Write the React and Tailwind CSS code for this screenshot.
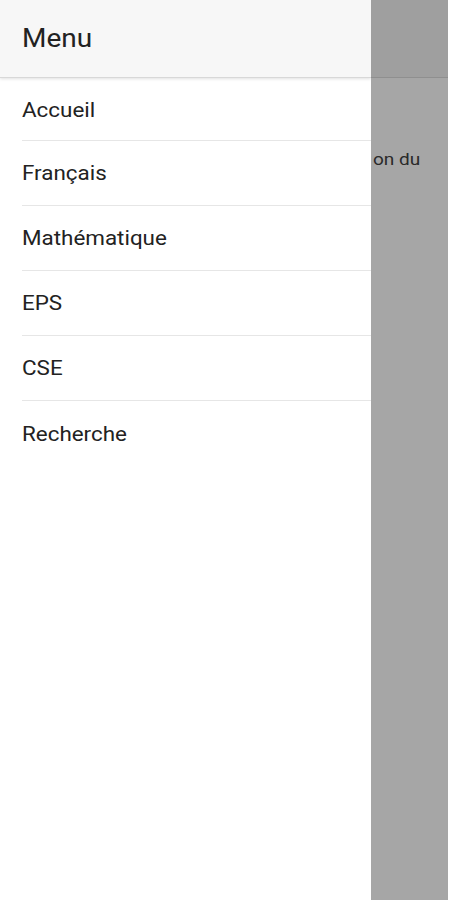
const items = ["Accueil", "Français", "Mathématique", "EPS", "CSE", "Recherche"];

export default function App() {
  return (
    <div
      className="flex h-[900px] w-[450px] overflow-hidden bg-white"
      style={{ fontFamily: "Roboto, 'Noto Sans', sans-serif" }}
    >
      {/* drawer */}
      <div className="flex w-[371px] shrink-0 flex-col bg-white shadow-[2px_0_6px_rgba(0,0,0,0.08)]">
        <div className="flex h-[78px] items-center border-b border-[#d8d8d8] bg-[#f7f7f7] px-[22px] shadow-[0_1px_3px_rgba(0,0,0,0.12)]">
          <span className="inline-block origin-left scale-x-[1.12] text-[25px] text-[#222]">Menu</span>
        </div>
        <ul className="pl-[22px]">
          {items.map((label, i) => (
            <li
              key={label}
              className={`flex items-center text-[20px] text-[#222] ${
                i < items.length - 1 ? "border-b border-[#e6e6e6]" : ""
              } ${i === 0 ? "h-[63px] pt-[1px]" : "h-[65px]"}`}
            >
              <span className="inline-block origin-left scale-x-[1.12]">{label}</span>
            </li>
          ))}
        </ul>
      </div>

      {/* dimmed page behind */}
      <div className="flex w-[77px] shrink-0 flex-col bg-[#a6a6a6]">
        <div className="h-[78px] border-b border-[#8f8f8f] bg-[#9f9f9f]" />
        <div className="mt-[69px] pl-[2px] text-[17px] text-[#2a2a2a]">
          <span className="inline-block origin-left scale-x-[1.12]">on du</span>
        </div>
      </div>
      <div className="flex-1 bg-white" />
    </div>
  );
}
